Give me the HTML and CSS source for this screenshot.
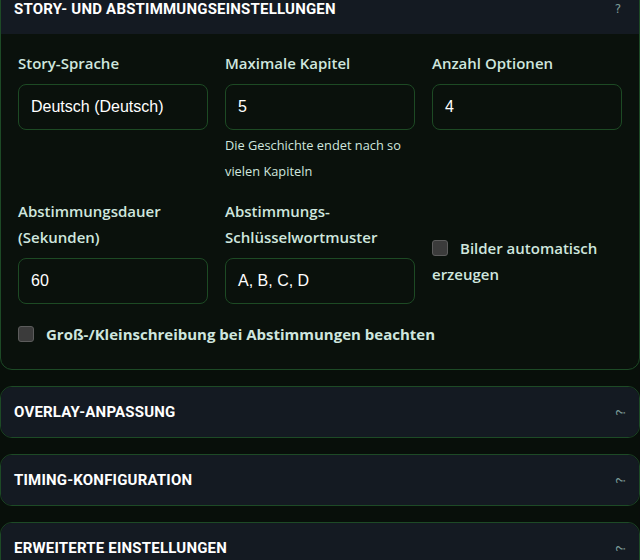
FILE: index.html
```html
<!DOCTYPE html>
<html lang="de">
  <head>
    <meta charset="UTF-8" />
    <meta name="viewport" content="width=device-width, initial-scale=1.0" />
    <link rel="stylesheet" href="styles.css">
    <title>Einstellungen</title>
  </head>
  <body>
    <div class="settings">
      <section class="card open">
        <div class="card-header">
          <h2>Story- und Abstimmungseinstellungen</h2>
          <span class="toggle">?</span>
        </div>
        <div class="card-body">
          <div class="form-grid">
            <div class="field">
              <label>Story-Sprache</label>
              <div class="input">Deutsch (Deutsch)</div>
            </div>
            <div class="field">
              <label>Maximale Kapitel</label>
              <div class="input">5</div>
              <div class="help">Die Geschichte endet nach so vielen Kapiteln</div>
            </div>
            <div class="field">
              <label>Anzahl Optionen</label>
              <div class="input">4</div>
            </div>
            <div class="field">
              <label>Abstimmungsdauer (Sekunden)</label>
              <div class="input">60</div>
            </div>
            <div class="field">
              <label>Abstimmungs-Schlüsselwortmuster</label>
              <div class="input">A, B, C, D</div>
            </div>
            <div class="field check-field">
              <label class="check"><span class="box"></span>Bilder automatisch erzeugen</label>
            </div>
          </div>
          <label class="check wide"><span class="box"></span>Groß-/Kleinschreibung bei Abstimmungen beachten</label>
        </div>
      </section>

      <section class="card">
        <div class="card-header">
          <h2>Overlay-Anpassung</h2>
          <span class="toggle closed">?</span>
        </div>
      </section>

      <section class="card">
        <div class="card-header">
          <h2>Timing-Konfiguration</h2>
          <span class="toggle closed">?</span>
        </div>
      </section>

      <section class="card">
        <div class="card-header">
          <h2>Erweiterte Einstellungen</h2>
          <span class="toggle closed">?</span>
        </div>
      </section>
    </div>
  </body>
</html>
```

FILE: styles.css
```css
body {
  margin: 0;
  padding: 0;
  background-color: #080f0a;
  color: #cfe6de;
  font-family: "Open Sans", "Noto Sans", sans-serif;
  overflow: hidden;
}

.settings {
  display: flex;
  flex-direction: column;
  gap: 16px;
  margin-top: -17px;
}

.card {
  border: 1px solid #1d4a26;
  border-radius: 12px;
  background-color: #131a22;
  overflow: hidden;
}

.card.open {
  background-color: #0a110c;
}

.card-header {
  height: 50px;
  padding: 0 18px 0 13px;
  display: flex;
  align-items: center;
  justify-content: space-between;
  background-color: #141a22;
}

.card-header h2 {
  margin: 0;
  font-family: Roboto, "Open Sans", sans-serif;
  font-size: 15px;
  font-weight: 700;
  text-transform: uppercase;
  letter-spacing: 0.2px;
  color: #ffffff;
}

.toggle {
  font-size: 12px;
  color: #7c9c98;
  font-family: "DejaVu Sans", sans-serif;
}

.toggle.closed {
  font-size: 13px;
  margin-right: -3px;
  transform: rotate(-90deg);
}

.card-body {
  padding: 16px 17px 22px;
}

.form-grid {
  display: grid;
  grid-template-columns: repeat(3, 1fr);
  column-gap: 17px;
  row-gap: 14px;
}

.field label {
  display: block;
  font-size: 15px;
  font-weight: 600;
  line-height: 26px;
  margin-bottom: 8px;
}

.input {
  box-sizing: border-box;
  height: 46px;
  padding: 0 12px;
  display: flex;
  align-items: center;
  border: 1px solid #1d4a24;
  border-radius: 8px;
  font-family: "Liberation Sans", Arial, sans-serif;
  font-size: 16px;
  color: #ffffff;
}

.help {
  margin-top: 2px;
  font-size: 12.8px;
  line-height: 26px;
}

.check-field {
  padding-top: 37px;
}

.check {
  font-size: 15px;
  font-weight: 700;
  line-height: 26px;
}

.field .check {
  margin: 0;
}

.box {
  display: inline-block;
  box-sizing: border-box;
  width: 16px;
  height: 16px;
  margin-right: 12px;
  vertical-align: -2px;
  background-color: #3b3b3b;
  border: 1px solid #5c5c5c;
  border-radius: 3px;
}

.check.wide {
  display: block;
  margin-top: 17px;
}
```
